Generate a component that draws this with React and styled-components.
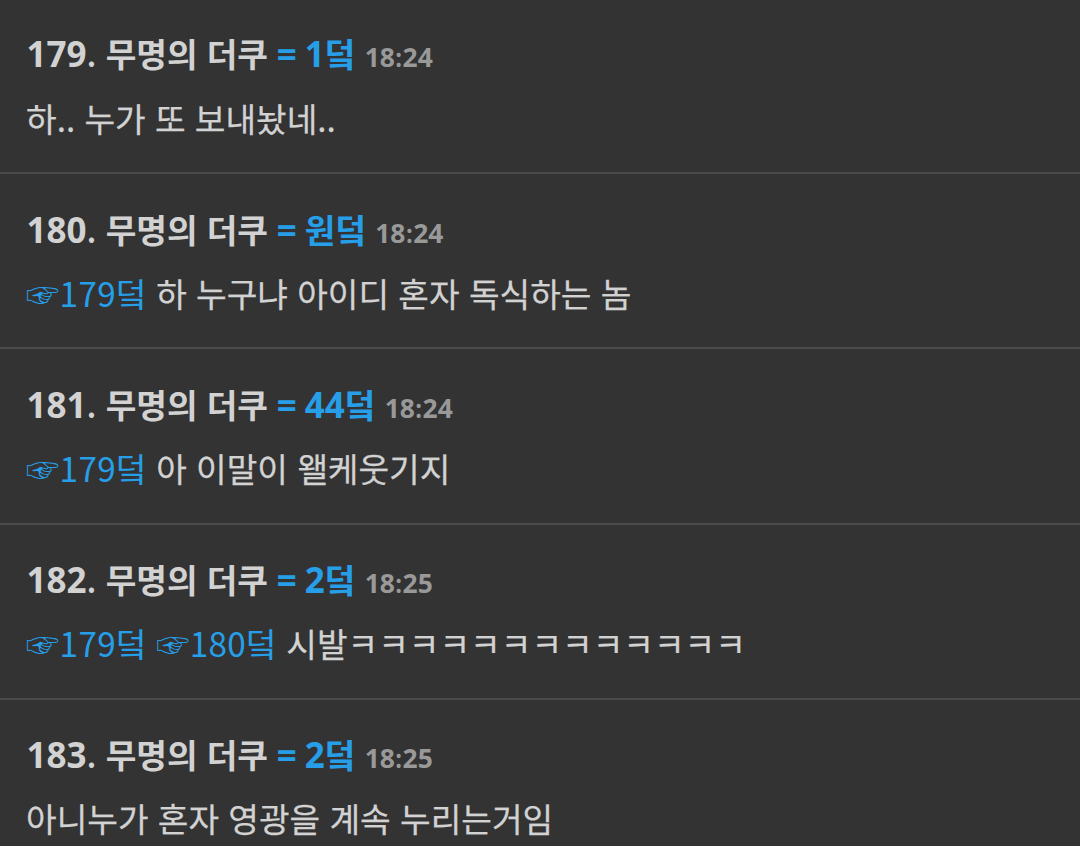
import React from "react";
import styled, { createGlobalStyle } from "styled-components";

const GlobalStyle = createGlobalStyle`
  body {
    margin: 0;
    background: #333333;
    overflow: hidden;
  }
`;

const CommentList = styled.main`
  height: 846px;
  overflow: hidden;
  color: #d2d2d2;
  font-family: "Noto Sans CJK KR", sans-serif;
`;

const Comment = styled.article`
  box-sizing: border-box;
  height: 175.2px;
  padding: 29.5px 26px 0;
  border-bottom: 2px solid #4b4b4b;

  &:first-child {
    height: 174.2px;
    padding-top: 28.4px;
  }

  &:first-child p {
    margin-top: 14.6px;
  }
`;

const Header = styled.header`
  height: 50px;
  padding-left: 0.5px;
  line-height: 50px;
  font-size: 33.3px;
  font-weight: 700;
  word-spacing: 1.6px;
  white-space: nowrap;
`;

const Digits = styled.span`
  font-family: "Open Sans", sans-serif;
  font-size: 35px;
  line-height: 1;
`;

const Equals = styled(Digits)`
  margin: 0 -1px 0 -0.5px;
`;

const Dot = styled.span`
  font-weight: 500;
`;

const Badge = styled.span`
  color: #269fe8;
`;

const Time = styled.time`
  color: #999999;
  font-size: 26px;

  ${Digits} {
    font-size: 26.4px;
  }
`;

const Body = styled.p`
  margin: 14.1px 0 0;
  height: 50px;
  line-height: 50px;
  font-size: 33.3px;
  word-spacing: 1.8px;
  white-space: nowrap;
  -webkit-text-stroke: 0.25px currentColor;
`;

const Reply = styled.a`
  color: #269fe8;
  letter-spacing: 0.3px;
  -webkit-text-stroke: 0;
`;

const comments = [
  { id: 179, no: "1", time: "18:24", replies: [], text: "하.. 누가 또 보내놨네.." },
  { id: 180, no: "", time: "18:24", replies: [179], text: "하 누구냐 아이디 혼자 독식하는 놈" },
  { id: 181, no: "44", time: "18:24", replies: [179], text: "아 이말이 왤케웃기지" },
  { id: 182, no: "2", time: "18:25", replies: [179, 180], text: "시발ㅋㅋㅋㅋㅋㅋㅋㅋㅋㅋㅋㅋㅋ" },
  { id: 183, no: "2", time: "18:25", replies: [], text: "아니누가 혼자 영광을 계속 누리는거임" },
];

function Clock({ value }) {
  const [hour, minute] = value.split(":");
  return (
    <Time>
      <Digits>{hour}</Digits>
      <Dot>:</Dot>
      <Digits>{minute}</Digits>
    </Time>
  );
}

function App() {
  return (
    <>
      <GlobalStyle />
      <CommentList>
        {comments.map((c) => (
          <Comment key={c.id}>
            <Header>
              <Digits>{c.id}</Digits>
              <Dot>.</Dot> 무명의 더쿠{" "}
              <Badge>
                <Equals>=</Equals> {c.no ? <Digits>{c.no}</Digits> : "원"}덬
              </Badge>{" "}
              <Clock value={c.time} />
            </Header>
            <Body>
              {c.replies.map((id) => (
                <React.Fragment key={id}>
                  <Reply>☞{id}덬</Reply>{" "}
                </React.Fragment>
              ))}
              {c.text}
            </Body>
          </Comment>
        ))}
      </CommentList>
    </>
  );
}

export default App;
